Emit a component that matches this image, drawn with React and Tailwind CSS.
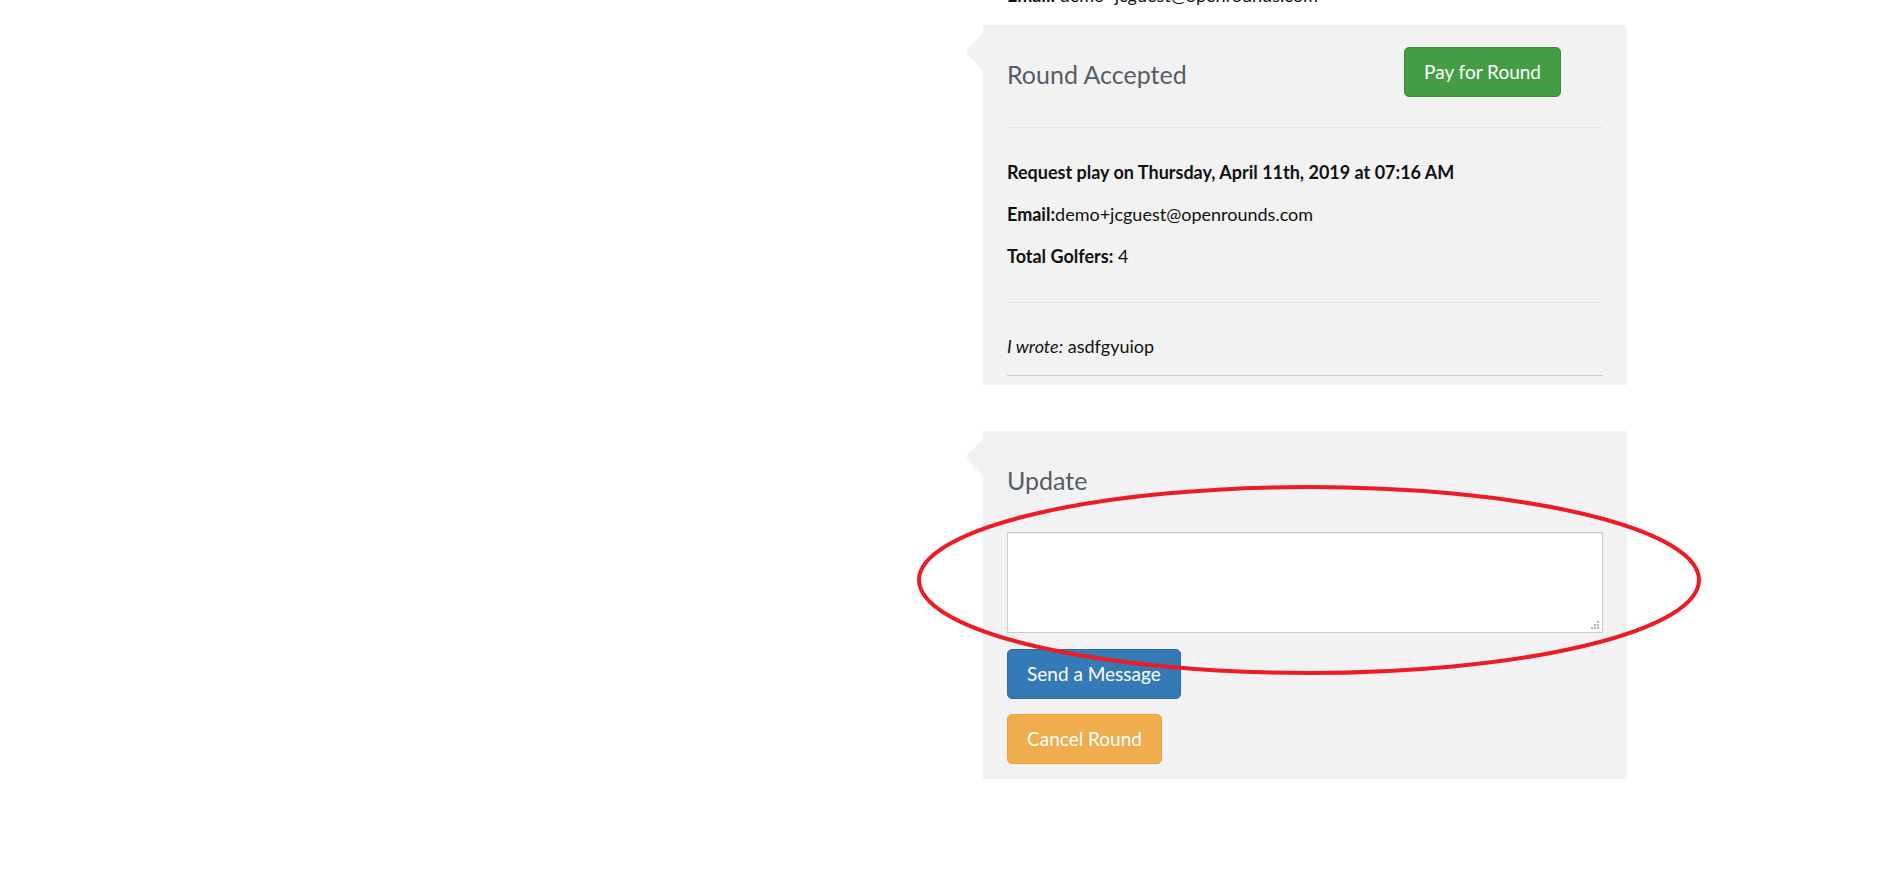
import React from 'react'

// little notch on the left side of each card
const Notch = ({ top }) => (
  <svg className={`absolute left-[-17px] ${top}`} width="17" height="37" viewBox="0 0 17 37">
    <polygon points="17,0 1,16 1,21 17,37" fill="#f2f2f2" />
  </svg>
)

const Card = ({ children, className = '' }) => (
  <div className={`relative w-[644px] bg-[#f2f2f2] px-6 ${className}`}>
    <Notch top="top-[8px]" />
    {children}
  </div>
)

const Btn = ({ children, className = '' }) => (
  <button
    type="button"
    className={`h-[50px] rounded-[5px] border px-[19px] text-[19px] leading-[22px] text-white ${className}`}
  >
    {children}
  </button>
)

export default function App() {
  return (
    <div className="relative min-h-[870px] overflow-hidden bg-white font-['Lato',sans-serif] text-[#111]">
      <div className="pl-[983px]">
        <p className="-mt-[16px] pl-6 text-[18px] leading-[22px]">
          <b>Email:</b> demo+jcguest@openrounds.com
        </p>

        <Card className="mt-[19px] pt-[22px] pb-[9px]">
          <div className="flex items-center justify-between pr-[42px]">
            <h3 className="mt-[4px] text-[25px] leading-[30px] text-[#555d66]">Round Accepted</h3>
            <Btn className="border-[#3d8b3d] bg-[#449d44]">Pay for Round</Btn>
          </div>
          <div className="mt-[30px] border-t border-[#e6e6e6]" />
          <div className="mt-[33px] flex flex-col gap-5 text-[18px] leading-[22px]">
            <p className="font-bold">Request play on Thursday, April 11th, 2019 at 07:16 AM</p>
            <p>
              <b>Email:</b>demo+jcguest@openrounds.com
            </p>
            <p>
              <b>Total Golfers:</b> 4
            </p>
          </div>
          <div className="mt-[35px] border-t border-[#e6e6e6]" />
          <p className="mt-[32px] text-[18px] leading-[22px]">
            <i>I wrote:</i> asdfgyuiop
          </p>
          <div className="mt-[18px] border-t border-[#cccccc]" />
        </Card>

        <Card className="mt-[46px] pt-[34px] pb-[15px]">
          <h3 className="text-[25px] leading-[30px] text-[#555d66]">Update</h3>
          <div className="relative mt-[37px]">
            <textarea className="block h-[101px] w-full resize-none border border-[#cccccc] bg-white shadow-[inset_0_1px_1px_rgba(0,0,0,0.075)] outline-none" />
            {/* resize grip */}
            <svg className="absolute bottom-[3px] right-[3px]" width="9" height="9" viewBox="0 0 9 9">
              <rect x="6" y="0" width="2" height="2" fill="#b5b5b5" />
              <rect x="3" y="3" width="2" height="2" fill="#b5b5b5" />
              <rect x="6" y="3" width="2" height="2" fill="#b5b5b5" />
              <rect x="0" y="6" width="2" height="2" fill="#b5b5b5" />
              <rect x="3" y="6" width="2" height="2" fill="#b5b5b5" />
              <rect x="6" y="6" width="2" height="2" fill="#b5b5b5" />
            </svg>
          </div>
          <div className="mt-4 flex flex-col items-start gap-[15px]">
            <Btn className="border-[#2e6da4] bg-[#337ab7]">Send a Message</Btn>
            <Btn className="border-[#eea236] bg-[#f0ad4e]">Cancel Round</Btn>
          </div>
        </Card>
      </div>

      {/* red hand-drawn annotation */}
      <svg className="pointer-events-none absolute left-0 top-0" width="1887" height="870">
        <ellipse cx="1309" cy="580" rx="390" ry="93" fill="none" stroke="#ed1c24" strokeWidth="4" />
      </svg>
    </div>
  )
}
